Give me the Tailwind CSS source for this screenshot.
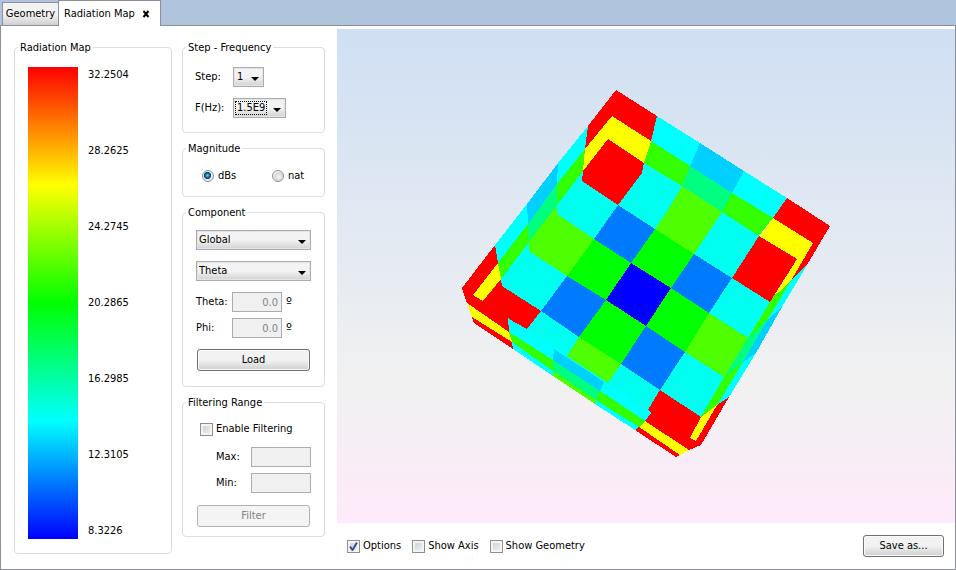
<!DOCTYPE html>
<html lang="en">
<head>
  <meta charset="UTF-8">
  <title>Radiation Map</title>
  <script src="https://cdn.jsdelivr.net/npm/@tailwindcss/browser@4"></script>
</head>
<body class="min-h-screen flex flex-col bg-white text-black text-[11px] leading-4 font-['DejaVu_Sans_Condensed','DejaVu_Sans',sans-serif]">

  <!-- tabs -->
  <nav class="h-[26px] flex items-end bg-[#b0c4de] pl-[2px] shadow-[inset_0_-1px_0_#8e8f9c]">
    <button class="h-6 w-14 border border-r-0 border-[#8e8f9c] bg-linear-to-b from-[#f3f3f3] from-50% to-[#d0d0d0] whitespace-nowrap">Geometry</button>
    <div class="h-[26px] w-[103px] flex items-center justify-between border border-b-0 border-[#8e8f9c] bg-white pl-[5px] pr-[10px]">
      <button class="whitespace-nowrap">Radiation Map</button>
      <button aria-label="Close tab">
        <svg class="w-2 h-2" viewBox="0 0 8 8"><path d="M1.5 1l5 6M6.5 1l-5 6" stroke="#000" stroke-width="2"/></svg>
      </button>
    </div>
  </nav>

  <main class="flex-1 flex border border-t-0 border-[#8e8f9c]">
    <div class="flex gap-[10px] pl-[13px] pr-3 pt-[13px] pb-[15px]">

      <!-- colour scale -->
      <fieldset class="w-[158px] flex flex-col border border-[#d5dfe5] rounded-[4px] px-[13px] pb-[14px]">
        <legend class="ml-[-10px] px-[2px] h-4 leading-[18px]">Radiation Map</legend>
        <div class="flex-1 flex gap-[10px] pt-3">
          <div class="w-[50px] bg-[linear-gradient(#f00_0%,#ff0_25%,#0f0_50%,#0ff_75%,#00f_100%)]"></div>
          <div class="flex flex-col justify-between">
            <span>32.2504</span>
            <span>28.2625</span>
            <span>24.2745</span>
            <span>20.2865</span>
            <span>16.2985</span>
            <span>12.3105</span>
            <span>8.3226</span>
          </div>
        </div>
      </fieldset>

      <div class="w-[143px] flex flex-col gap-[7px]">
        <fieldset class="border border-[#d5dfe5] rounded-[4px] px-3 pb-[14px]">
          <legend class="ml-[-9px] px-[2px] h-4 leading-[18px]">Step - Frequency</legend>
          <div class="flex flex-col gap-[11px] pt-3">
            <div class="flex items-center">
              <label for="step" class="w-[38px]">Step:</label>
              <div class="relative">
                <select id="step" class="block appearance-none w-[31px] h-5 pl-[3px] border border-[#abacb3] outline outline-[#e4e4e6] -outline-offset-2 bg-linear-to-b from-[#f3f3f3] from-50% to-[#d2d2d2]"><option>1</option></select>
                <svg class="absolute right-[5px] top-[10px] w-2 h-1 pointer-events-none" viewBox="0 0 8 4"><path d="M0 0h8L4 4z"/></svg>
              </div>
            </div>
            <div class="flex items-center">
              <label for="freq" class="w-[38px]">F(Hz):</label>
              <div class="relative">
                <select id="freq" class="block appearance-none w-[53px] h-5 pl-[3px] border border-[#abacb3] outline outline-[#e4e4e6] -outline-offset-2 bg-linear-to-b from-[#f3f3f3] from-50% to-[#d2d2d2]"><option>1.5E9</option></select>
                <span class="absolute left-[2px] top-[3px] w-8 h-[14px] border border-dotted border-black pointer-events-none"></span>
                <svg class="absolute right-[5px] top-[10px] w-2 h-1 pointer-events-none" viewBox="0 0 8 4"><path d="M0 0h8L4 4z"/></svg>
              </div>
            </div>
          </div>
        </fieldset>

        <fieldset class="border border-[#d5dfe5] rounded-[4px] px-3 pb-3">
          <legend class="ml-[-9px] px-[2px] h-4 leading-[18px]">Magnitude</legend>
          <div class="flex pt-3 pl-[7px]">
            <label class="w-[70px] flex items-center gap-1">
              <input type="radio" name="mag" checked class="appearance-none w-3 h-3 rounded-full border border-[#8e8f8f] bg-[radial-gradient(circle_at_45%_45%,#7fd0f0_0,#1f84b8_20%,#0b3c5f_42%,#e9eef2_50%)]">
              dBs
            </label>
            <label class="flex items-center gap-1">
              <input type="radio" name="mag" class="appearance-none w-3 h-3 rounded-full border border-[#8e8f8f] bg-[radial-gradient(circle_at_60%_60%,#f4f4f4_0,#d4d6d8_50%,#f4f4f4_65%)]">
              nat
            </label>
          </div>
        </fieldset>

        <fieldset class="border border-[#d5dfe5] rounded-[4px] px-[13px] pb-[15px]">
          <legend class="ml-[-10px] px-[2px] h-4 leading-[18px]">Component</legend>
          <div class="flex flex-col gap-[11px] pt-[10px]">
            <div class="relative">
              <select aria-label="Component" class="block appearance-none w-full h-5 pl-[2px] border border-[#abacb3] outline outline-[#e4e4e6] -outline-offset-2 bg-linear-to-b from-[#f3f3f3] from-50% to-[#d2d2d2]"><option>Global</option></select>
              <svg class="absolute right-[5px] top-[10px] w-2 h-1 pointer-events-none" viewBox="0 0 8 4"><path d="M0 0h8L4 4z"/></svg>
            </div>
            <div class="relative">
              <select aria-label="Cut" class="block appearance-none w-full h-5 pl-[2px] border border-[#abacb3] outline outline-[#e4e4e6] -outline-offset-2 bg-linear-to-b from-[#f3f3f3] from-50% to-[#d2d2d2]"><option>Theta</option></select>
              <svg class="absolute right-[5px] top-[10px] w-2 h-1 pointer-events-none" viewBox="0 0 8 4"><path d="M0 0h8L4 4z"/></svg>
            </div>
            <div class="flex flex-col gap-[6px]">
              <div class="flex items-center">
                <label for="theta" class="w-9">Theta:</label>
                <input id="theta" value="0.0" disabled class="w-[50px] h-5 px-[3px] text-right border border-[#abadb3] bg-[#f0f0f0] text-[#838383]">
                <span class="pl-1 text-sm leading-4">º</span>
              </div>
              <div class="flex items-center">
                <label for="phi" class="w-9">Phi:</label>
                <input id="phi" value="0.0" disabled class="w-[50px] h-5 px-[3px] text-right border border-[#abadb3] bg-[#f0f0f0] text-[#838383]">
                <span class="pl-1 text-sm leading-4">º</span>
              </div>
            </div>
            <button class="mx-[1px] h-[22px] border border-[#707070] rounded-[3px] shadow-[inset_0_0_0_1px_#fafafa] bg-linear-to-b from-[#f2f2f2] from-50% to-[#cfcfcf]">Load</button>
          </div>
        </fieldset>

        <fieldset class="border border-[#d5dfe5] rounded-[4px] px-[13px] pb-[9px]">
          <legend class="ml-[-10px] px-[2px] h-4 leading-[18px]">Filtering Range</legend>
          <div class="flex flex-col pt-[11px]">
            <label class="flex items-center gap-[3px] pl-1">
              <input type="checkbox" class="appearance-none w-[13px] h-[13px] border border-[#8e8f8f] shadow-[inset_0_0_0_2px_#f4f4f4] bg-linear-to-br from-[#c6cacf] to-[#f6f6f6]">
              Enable Filtering
            </label>
            <div class="flex flex-col gap-[6px] pt-[10px] pl-5">
              <div class="flex items-center justify-between">
                <label for="max">Max:</label>
                <input id="max" disabled class="w-[60px] h-5 border border-[#abadb3] bg-[#f0f0f0]">
              </div>
              <div class="flex items-center justify-between">
                <label for="min">Min:</label>
                <input id="min" disabled class="w-[60px] h-5 border border-[#abadb3] bg-[#f0f0f0]">
              </div>
            </div>
            <button disabled class="mt-3 mx-[1px] h-[22px] border border-[#adb2b5] rounded-[3px] bg-[#f4f4f4] text-[#838383]">Filter</button>
          </div>
        </fieldset>
      </div>
    </div>

    <!-- 3D view -->
    <section class="flex-1 flex flex-col pt-[3px]">
      <div class="flex-1 flex bg-linear-to-b from-[#cfdff3] via-[#f1f1f1] via-72% to-[#feeafa]">
        <svg class="w-full" viewBox="337 29 618 494" shape-rendering="crispEdges">
          <!-- left side -->
          <path fill="#f00" d="M616 90L588 126 585 149 612 116zM495 245L462 288 467 303 509 332 527 329 541 311 502 286z"/>
          <path fill="#0ff" d="M588 126L558 163 557 184 585 149zM527 204L495 245 498 263 528 224z"/>
          <path fill="#00d0ff" d="M558 163L527 204 528 224 557 184z"/>
          <path fill="#ff0" d="M612 116L585 149 583 171 608 139zM498 263L473 295 483 301 501 279z"/>
          <path fill="#3f0" d="M585 149L557 184 557 205 583 171zM528 224L498 263 501 279 529 242z"/>
          <path fill="#00ff80" d="M557 184L528 224 529 242 557 205z"/>
          <!-- top side -->
          <path fill="#f00" d="M616 90L657 116 651 141 612 116zM787 198L830 226 807 265 792 279 813 243 773 218z"/>
          <path fill="#0ff" d="M657 116L700 143 690 166 651 141zM744 171L787 198 773 218 732 193z"/>
          <path fill="#00d0ff" d="M700 143L744 171 732 193 690 166z"/>
          <path fill="#ff0" d="M612 116L651 141 644 163 608 139zM773 218L813 243 792 279 779 293 773 297 795 262 759 238z"/>
          <path fill="#3f0" d="M651 141L690 166 682 186 644 163zM732 193L773 218 759 236 722 212z"/>
          <path fill="#00ff80" d="M690 166L732 193 722 212 682 186z"/>
          <!-- right side -->
          <path fill="#0ff" d="M807 265L782 307 768 319 792 279zM756 353L729 397 717 405 743 362z"/>
          <path fill="#00d0ff" d="M782 307L756 353 743 362 768 319z"/>
          <path fill="#3f0" d="M792 279L768 319 748 338 770 302 774 295 779 292zM743 362L717 405 701 417 724 377z"/>
          <path fill="#00ff80" d="M768 319L743 362 724 377 748 338z"/>
          <!-- rim between the front face and the bottom side -->
          <path fill="#0ff" d="M508 318L527 325 567 350 608 377 652 406 651 413 604 384 554 351z"/>
          <!-- front face -->
          <path fill="#f00" d="M608 139L644 163 642 173 618 205 582 181 583 171zM759 236L797 259 770 302 732 278z"/>
          <path fill="#00fff0" d="M644 163L682 186 680 191 668 210 655 229 618 205 642 173zM722 212L759 236 732 278 694 254zM583 171L582 181 618 205 594 239 557 214 557 205zM732 278L770 302 748 338 709 313zM529 242L529 251 567 276 541 311 502 286 501 279zM685 352L724 377 701 417 660 390zM541 311L579 337 567 356 527 329zM621 364L660 390 648 410 608 383z"/>
          <path fill="#4dff00" d="M682 186L722 212 694 254 655 229 668 210zM557 205L557 214 594 239 567 276 529 251 529 242zM709 313L748 338 724 377 685 352zM579 337L621 364 608 383 567 356z"/>
          <path fill="#0f0" d="M655 229L694 254 671 288 631 263zM594 239L631 263 606 300 567 276zM671 288L709 313 685 352 646 326zM606 300L646 326 621 364 579 337z"/>
          <path fill="#007bff" d="M618 205L655 229 631 263 594 239zM694 254L732 278 709 313 671 288zM567 276L606 300 579 337 541 311zM646 326L685 352 660 390 621 364z"/>
          <path fill="#00f" d="M631 263L671 288 646 326 606 300z"/>
          <!-- bottom side -->
          <path fill="#f00" d="M509 319L540 311 527 329zM660 390L701 417 717 405 729 397 701 445 689 450 645 421 651 413 648 410zM472 317L512 342 513 349 474 323zM639 427L680 455 676 457 635 430z"/>
          <path fill="#0ff" d="M508 318L554 349 553 360 509 332zM604 382L651 413 645 421 600 391zM512 342L553 371 553 376 513 349zM596 400L639 427 635 430 595 404z"/>
          <path fill="#00d0ff" d="M554 349L604 382 600 391 553 360z"/>
          <path fill="#ff0" d="M467 303L509 332 512 342 472 317zM645 421L689 450 680 455 639 427zM701 417L717 405 696 441 690 438z"/>
          <path fill="#3f0" d="M509 332L553 360 553 371 512 342zM600 391L645 421 639 427 596 400z"/>
          <path fill="#00ff80" d="M553 360L600 391 596 400 553 371z"/>
          <path fill="#4dff00" d="M553 371L596 400 595 404 553 376z"/>
        </svg>
      </div>

      <div class="h-[46px] flex items-center gap-[11px] pl-[10px] pr-[11px] bg-white">
        <label class="relative flex items-center gap-[3px]">
          <input type="checkbox" checked class="appearance-none w-[13px] h-[13px] border border-[#8e8f8f] shadow-[inset_0_0_0_2px_#f4f4f4] bg-linear-to-br from-[#c6cacf] to-[#f6f6f6]">
          <svg class="absolute left-[2px] w-[9px] h-[9px] pointer-events-none" viewBox="0 0 9 9"><path d="M1 4.5L3.5 8 8 .5" fill="none" stroke="#3a4f9a" stroke-width="2"/></svg>
          Options
        </label>
        <label class="flex items-center gap-[3px]">
          <input type="checkbox" class="appearance-none w-[13px] h-[13px] border border-[#8e8f8f] shadow-[inset_0_0_0_2px_#f4f4f4] bg-linear-to-br from-[#c6cacf] to-[#f6f6f6]">
          Show Axis
        </label>
        <label class="flex items-center gap-[3px]">
          <input type="checkbox" class="appearance-none w-[13px] h-[13px] border border-[#8e8f8f] shadow-[inset_0_0_0_2px_#f4f4f4] bg-linear-to-br from-[#c6cacf] to-[#f6f6f6]">
          Show Geometry
        </label>
        <button class="ml-auto w-[81px] h-[22px] border border-[#707070] rounded-[3px] shadow-[inset_0_0_0_1px_#fafafa] bg-linear-to-b from-[#f2f2f2] from-50% to-[#cfcfcf]">Save as...</button>
      </div>
    </section>
  </main>

</body>
</html>
